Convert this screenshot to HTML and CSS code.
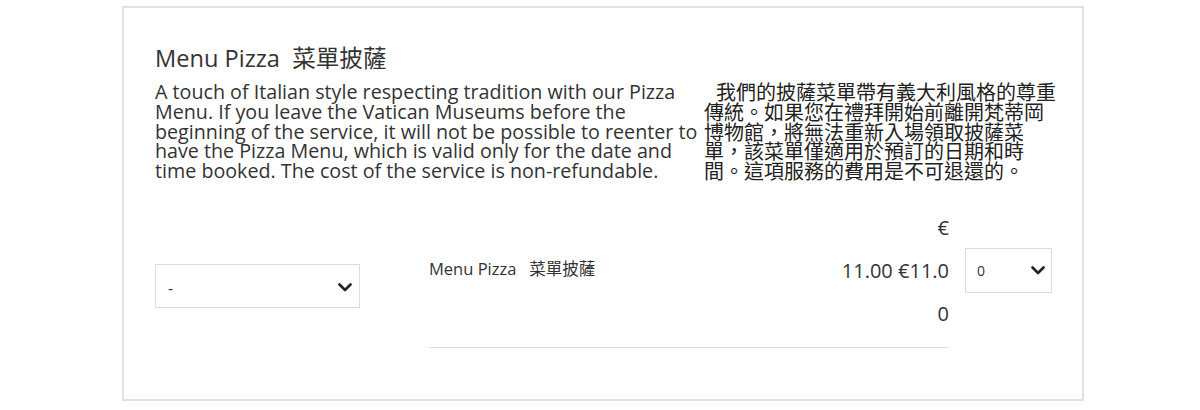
FILE: index.html
```html
<!DOCTYPE html>
<html lang="zh-Hant">
<head>
<meta charset="utf-8">
<title>Menu Pizza</title>
<link rel="stylesheet" href="styles.css">
</head>
<body>
<div class="card">
  <h2 class="title">Menu Pizza&nbsp; 菜單披薩</h2>
  <div class="desc">
    <p class="en">A touch of Italian style respecting tradition with our Pizza Menu. If you leave the Vatican Museums before the beginning of the service, it will not be possible to reenter to have the Pizza Menu, which is valid only for the date and time booked. The cost of the service is non-refundable.</p>
    <p class="zh">我們的披薩菜單帶有義大利風格的尊重傳統。如果您在禮拜開始前離開梵蒂岡博物館，將無法重新入場領取披薩菜單，該菜單僅適用於預訂的日期和時間。這項服務的費用是不可退還的。</p>
  </div>
  <div class="row">
    <div class="select select-date">
      <span class="select-value">-</span>
      <svg class="chev" width="14" height="9" viewBox="0 0 14 9"><polyline points="1.5,1.5 7,7 12.5,1.5" fill="none" stroke="#222" stroke-width="2.6" stroke-linecap="round" stroke-linejoin="round"/></svg>
    </div>
    <div class="product">
      <div class="name">Menu Pizza&nbsp;&nbsp; 菜單披薩</div>
      <div class="price"><span class="cur">€</span><span class="amt">11.00 €11.00</span></div>
    </div>
    <div class="select select-qty">
      <span class="select-value">0</span>
      <svg class="chev" width="14" height="9" viewBox="0 0 14 9"><polyline points="1.5,1.5 7,7 12.5,1.5" fill="none" stroke="#222" stroke-width="2.6" stroke-linecap="round" stroke-linejoin="round"/></svg>
    </div>
  </div>
</div>
</body>
</html>
```

FILE: styles.css
```css
* { box-sizing: border-box; }
html, body { margin: 0; padding: 0; background: #fff; }
body {
  font-family: "Open Sans", "Noto Sans CJK TC", sans-serif;
  color: #333;
}
.card {
  margin: 6px 0 0 122px;
  width: 962px;
  height: 395px;
  border: 2px solid #e2e2e2;
  padding: 36px 24px 0 31px;
}
.title {
  margin: 0 0 10px 0;
  font-weight: 400;
  font-size: 23.6px;
  line-height: 28px;
  color: #333;
}
.desc {
  display: grid;
  grid-template-columns: 549px 1fr;
  font-size: 19.7px;
  line-height: 19.8px;
}
.desc p { margin: 0; }
.zh {
  font-family: "Noto Sans CJK TC", sans-serif;
  font-size: 20px;
  text-indent: 12px;
  color: #222;
}
.row {
  display: flex;
  align-items: flex-start;
  margin-top: 25px;
}
.select {
  display: flex;
  align-items: center;
  justify-content: space-between;
  border: 1px solid #dcdcdc;
  background: #fff;
}
.select-date {
  width: 205px;
  height: 44px;
  margin-top: 58px;
  padding: 4px 7px 0 12px;
  font-size: 16px;
}
.select-qty {
  width: 87px;
  height: 45px;
  margin-top: 42px;
  margin-left: 16px;
  padding: 0 6px 0 11px;
  font-size: 14px;
}
.select-value { color: #333; }
.chev { display: block; }
.product {
  width: 520px;
  margin-left: 69px;
  display: flex;
  align-items: center;
  justify-content: space-between;
  border-bottom: 1px solid #dedede;
  padding-bottom: 12px;
}
.name {
  font-size: 16.5px;
  color: #333;
  margin-top: -4px;
}
.price {
  width: 108px;
  text-align: right;
  font-size: 20px;
  line-height: 43px;
  word-break: break-all;
  color: #333;
}
.cur { display: block; }
```
